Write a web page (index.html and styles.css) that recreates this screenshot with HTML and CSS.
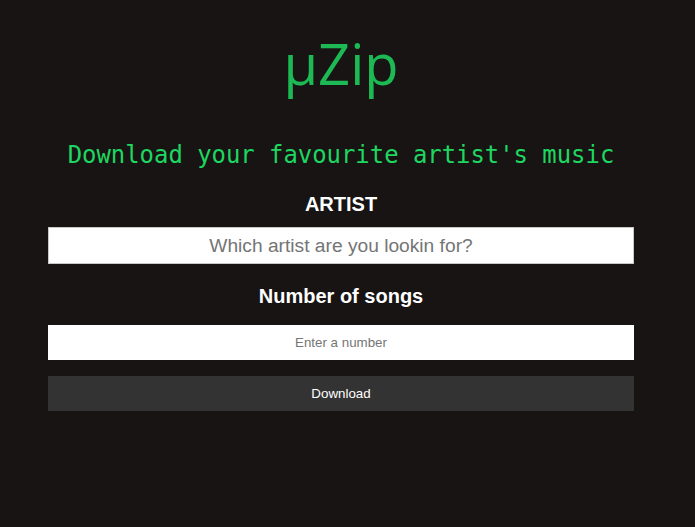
FILE: index.html
```html
<!DOCTYPE html>
<html>
<head>
<meta charset="utf-8">
<link rel="stylesheet" href="styles.css">
</head>
<body>
<main class="app">
  <h1 class="logo">µZip</h1>
  <p class="tagline">Download your favourite artist's music</p>
  <form class="form">
    <label class="label" for="artist">ARTIST</label>
    <input class="input input-artist" id="artist" type="text" placeholder="Which artist are you lookin for?">
    <label class="label label-songs" for="songs">Number of songs</label>
    <input class="input input-songs" id="songs" type="text" inputmode="numeric" placeholder="Enter a number">
    <button class="button" type="button">Download</button>
  </form>
</main>
</body>
</html>
```
FILE: styles.css
```css
html, body {
  margin: 0;
  padding: 0;
  background: #181414;
  height: 100%;
}
body {
  font-family: "Liberation Sans", Arial, sans-serif;
}
.app {
  width: 586px;
  margin-left: 48px;
  display: flex;
  flex-direction: column;
  align-items: stretch;
}
.logo {
  margin: 25px 0 0;
  font-family: "Open Sans", sans-serif;
  font-weight: 500;
  font-size: 56px;
  line-height: 76px;
  color: #1db954;
  text-align: center;
}
.tagline {
  margin: 39px 0 0;
  font-family: "DejaVu Sans Mono", monospace;
  font-size: 23.9px;
  line-height: 30px;
  color: #1ed760;
  text-align: center;
  white-space: nowrap;
}
.form {
  display: flex;
  flex-direction: column;
  margin-top: 20px;
}
.label {
  font-weight: 700;
  font-size: 20px;
  line-height: 28px;
  color: #fff;
  text-align: center;
}
.label-songs {
  margin-top: 18px;
}
.input {
  box-sizing: border-box;
  width: 100%;
  border: none;
  background: #fff;
  text-align: center;
  font-family: "Liberation Sans", Arial, sans-serif;
  outline: none;
  padding: 0;
}
.input::placeholder {
  color: #757575;
}
.input-artist {
  margin-top: 9px;
  height: 37px;
  border: 1px solid #c8c8c8;
  font-size: 19.2px;
}
.input-songs {
  margin-top: 15px;
  height: 35px;
  font-size: 13.33px;
}
.button {
  margin-top: 16px;
  height: 35px;
  border: none;
  background: #333333;
  color: #fff;
  font-family: "Liberation Sans", Arial, sans-serif;
  font-size: 13.33px;
}
```
